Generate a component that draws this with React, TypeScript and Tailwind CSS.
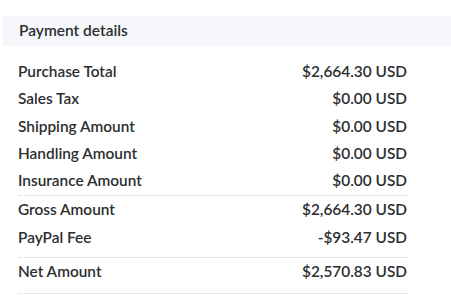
import React from "react";

const top = [
  ["Purchase Total", "$2,664.30 USD"],
  ["Sales Tax", "$0.00 USD"],
  ["Shipping Amount", "$0.00 USD"],
  ["Handling Amount", "$0.00 USD"],
  ["Insurance Amount", "$0.00 USD"],
];
const mid = [
  ["Gross Amount", "$2,664.30 USD"],
  ["PayPal Fee", "-$93.47 USD"],
];

function Row({ l, r }: { l: string; r: string }) {
  return (
    <div className="flex justify-between leading-[27.3px]">
      <span>{l}</span>
      <span>{r}</span>
    </div>
  );
}

export default function App() {
  return (
    <div
      className="w-[451px] h-[301px] bg-white text-[#2c2e2f] pt-4"
      style={{ fontFamily: "Lato, 'Noto Sans', sans-serif" }}
    >
      <div className="ml-[3px] h-[30px] bg-[#f5f7fa] pl-[16px] flex items-center text-[15.5px] font-semibold">
        Payment details
      </div>
      <div className="ml-[18px] w-[389px] text-[15.4px] font-semibold mt-[12px]">
        <div className="pb-[1px] border-b border-dotted border-[#cfcfcf]">
          {top.map(([l, r]) => (
            <Row key={l} l={l} r={r} />
          ))}
        </div>
        <div className="pb-[6px] border-b border-dotted border-[#cfcfcf]">
          {mid.map(([l, r]) => (
            <Row key={l} l={l} r={r} />
          ))}
        </div>
        <div className="pb-[8px] border-b border-dotted border-[#cfcfcf]">
          <Row l="Net Amount" r="$2,570.83 USD" />
        </div>
      </div>
    </div>
  );
}
